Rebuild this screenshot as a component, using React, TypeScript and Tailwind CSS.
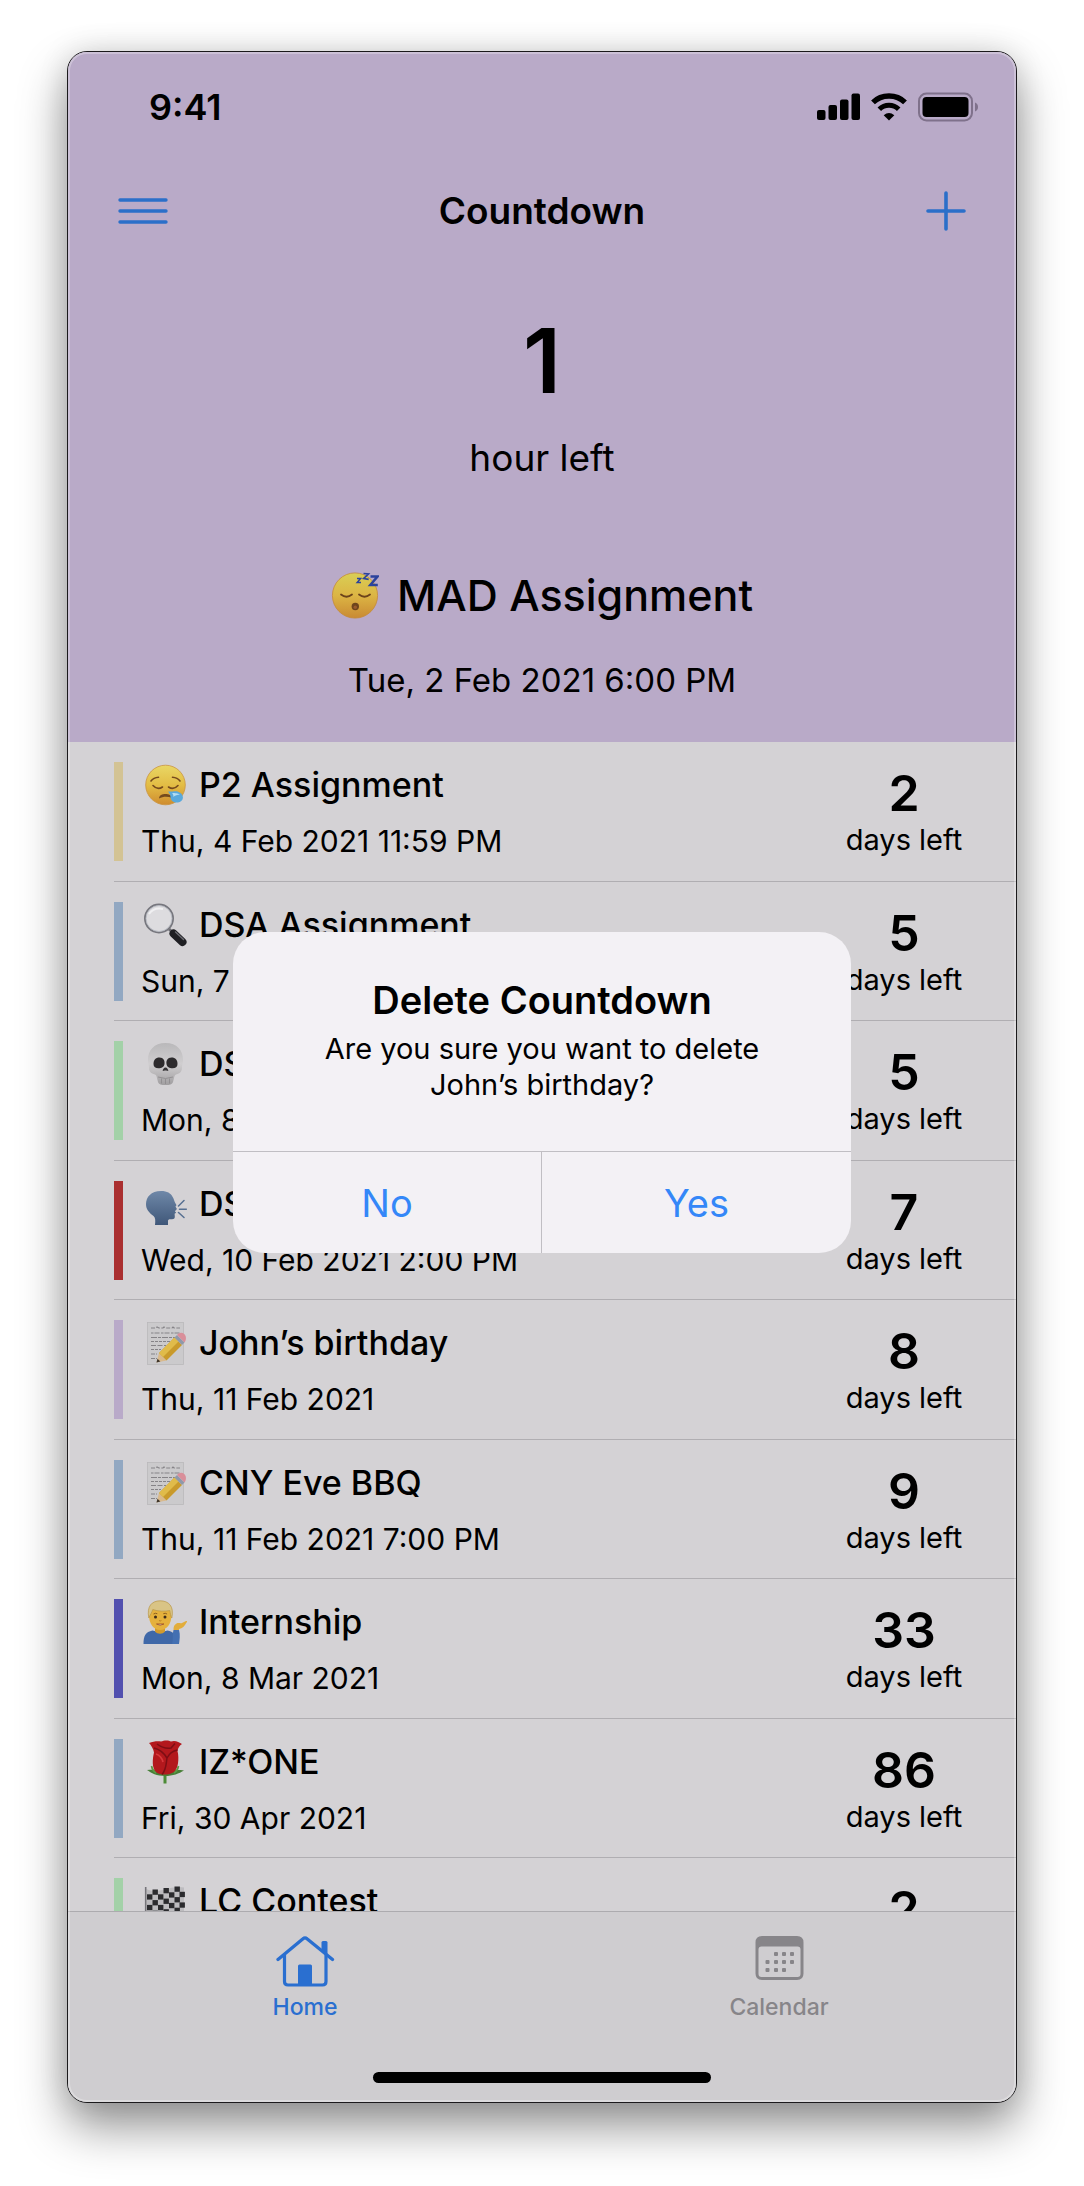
import type { ReactNode } from "react";

function SleepingFace() {
  return (
    <svg viewBox="0 0 48 48" className="size-12 shrink-0" aria-hidden="true">
      <defs>
        <linearGradient id="sleeping" x1="0" y1="0" x2="0" y2="1">
          <stop offset="0" stopColor="#d9cf55" />
          <stop offset="0.5" stopColor="#dcb544" />
          <stop offset="1" stopColor="#c98a33" />
        </linearGradient>
      </defs>
      <circle cx="24" cy="24.5" r="22.6" fill="url(#sleeping)" stroke="#c58a3a" strokeWidth="0.8" />
      <g fill="none" stroke="#6b431b" strokeWidth="1.8" strokeLinecap="round">
        <path d="M10 23.500q5.500 4.500 11 0" />
        <path d="M28 23.500q5.500 4.500 11 0" />
      </g>
      <circle cx="24.300" cy="35.500" r="3.700" fill="#6e441c" />
      <circle cx="24.300" cy="36.300" r="1.700" fill="#9a5a2c" />
      <g fill="none" stroke="#2c439c" strokeLinejoin="miter">
        <path d="M26 7.500h3.600l-3.400 4h3.800" strokeWidth="1.500" />
        <path d="M32.500 2.500l5 0.500l-4.800 4.500l5 0.800" strokeWidth="1.700" />
        <path d="M39.500 5.500h7l-7.200 8.500h7.500" strokeWidth="2.500" />
      </g>
    </svg>
  );
}

function Art({ children }: { children: ReactNode }) {
  return (
    <svg viewBox="0 0 44 44" className="size-11 shrink-0" aria-hidden="true">
      {children}
    </svg>
  );
}

function SleepyFace() {
  return (
    <Art>
      <defs>
        <linearGradient id="sleepy" x1="0" y1="0" x2="0" y2="1">
          <stop offset="0" stopColor="#e9d765" />
          <stop offset="0.500" stopColor="#e3bd45" />
          <stop offset="1" stopColor="#cf8c2f" />
        </linearGradient>
      </defs>
      <circle cx="22.500" cy="22" r="19.800" fill="url(#sleepy)" stroke="#cb9440" strokeWidth="0.800" />
      <g fill="none" stroke="#74491d" strokeWidth="1.600" strokeLinecap="round">
        <path d="M10 22.500q4.500 5 9.500 1.500" />
        <path d="M35 22.500q-4.500 5-9.500 1.500" />
        <path d="M8 18q2.500-3.500 7.500-3.800" />
        <path d="M37 18q-2.500-3.500-7.500-3.800" />
      </g>
      <path d="M16 35.500c0.500-3.500 3-4.500 6.500-4.500s6 1 6.500 4c-4-1.600-9-1.600-13 0.500z" fill="#74491d" />
      <path d="M25 28.500c5 0.300 8.500-1.500 12.500 1.500c4 3.200 3 8.500-2.500 9.500c-5 0.800-7.500-2.500-7.500-5.500c0-2.300-1-4-2.500-5.500z" fill="#59a9dc" />
      <path d="M29 30c3 0.300 6-0.300 8 2c-2.500-0.700-5 0.500-6.500 2c0-1.500-0.500-3-1.500-4z" fill="#b5def2" />
    </Art>
  );
}

function Magnifier() {
  return (
    <Art>
      <path d="M26 26l5 5" stroke="#6d6d74" strokeWidth="3" />
      <path d="M30.500 30.500L39.500 39" stroke="#1f1f23" strokeWidth="8" strokeLinecap="round" />
      <path d="M32.500 29l8 7.500" stroke="#6c6c73" strokeWidth="1.400" strokeLinecap="round" />
      <circle cx="16" cy="15.500" r="14" fill="#dddcdf" stroke="#77777e" strokeWidth="2" />
      <circle cx="16" cy="15.500" r="13" fill="none" stroke="#b9bcc4" strokeWidth="0.900" />
      <path d="M6 11q5-7 14-5" fill="none" stroke="#f0f0f2" strokeWidth="2" />
    </Art>
  );
}

function Skull() {
  return (
    <Art>
      <defs>
        <linearGradient id="skull" x1="0" y1="0" x2="0" y2="1">
          <stop offset="0" stopColor="#b9b8ba" />
          <stop offset="0.500" stopColor="#d0ced0" />
          <stop offset="1" stopColor="#a09ea0" />
        </linearGradient>
      </defs>
      <path d="M22.500 1C11 1 5 8.500 5 17.500c0 4 1 5 1 8s1 5.500 4.500 6.500c2.500 0.800 3 1.500 3.500 4l1 4c0.700 2.500 3.500 3 7.500 3s6.800-0.500 7.500-3l1-4c0.500-2.500 1-3.200 3.500-4c3.500-1 4.500-3.500 4.500-6.500s1-4 1-8C40 8.500 34 1 22.500 1z" fill="url(#skull)" />
      <path d="M10.500 22c0-4 2-6.500 6-6.500s5.500 3 5 6.500c-0.400 3-3 4.200-6 4.200s-5-1.200-5-4.200z" fill="#2d2b2d" />
      <path d="M34.500 22c0-4-2-6.500-6-6.500s-5.500 3-5 6.500c0.400 3 3 4.200 6 4.200s5-1.200 5-4.200z" fill="#2d2b2d" />
      <path d="M22.500 25.500c1.600 0 2.800 2 2.800 3.600l-2.300-0.500h-1l-2.300 0.500c0-1.600 1.200-3.600 2.800-3.600z" fill="#353335" />
      <path d="M15 35q7.500 3 15 0M18.500 36.500v5M22.500 37v5M26.500 36.500v5" fill="none" stroke="#8b898b" strokeWidth="0.800" />
    </Art>
  );
}

function SpeakingHead() {
  return (
    <Art>
      <defs>
        <linearGradient id="speaker" x1="0" y1="0" x2="0" y2="1">
          <stop offset="0" stopColor="#6f88a8" />
          <stop offset="1" stopColor="#3f5779" />
        </linearGradient>
      </defs>
      <path d="M18 9C8 9 3 15 3 22c0 5.500 3 8.500 7.500 12c2 1.700 2 4.500 1.500 9h13v-4c0-1.500 1-2 3-1.800c3 0.300 4-0.700 3.800-3l-0.200-2.500l1.600-1l-1.300-1.500l2-2.200l-1.500-2.500c1.200-0.700 1.200-1.500 0.500-2.500C30.500 19 31 9 18 9z" fill="url(#speaker)" />
      <path d="M35.500 24L41 18.500M36.500 27.200h6.800M35.500 30.500l5.500 5" stroke="#566f91" strokeWidth="1.500" strokeLinecap="round" />
    </Art>
  );
}

function Memo() {
  return (
    <Art>
      <rect x="4.500" y="1.500" width="36" height="42" fill="#cbcacc" stroke="#bab9bb" strokeWidth="0.800" />
      <g fill="none" stroke="#858387" strokeWidth="1.100">
        <path d="M8 7h5l1-1 2 1h4l1-1 2 1h6l1-1 1 1h6" strokeDasharray="4 1.500" />
        <path d="M8 12h30" strokeDasharray="2.500 1 5 1.500" />
        <path d="M8 16.500h26" strokeDasharray="6 1 3 1" />
        <path d="M8 20.500h20" strokeDasharray="3 1" />
        <path d="M8 24.500h15" strokeDasharray="5 1.500" />
        <path d="M8 28.500h10" strokeDasharray="3 1" />
        <path d="M8 33h6M8 37.500h6" strokeDasharray="4 1" />
      </g>
      <path d="M13.500 41.500l2.500-9.500l7.500 7.500z" fill="#d9b98c" />
      <path d="M13.500 41.500l1-3.800l2.800 2.900z" fill="#3b3328" />
      <path d="M16 32L31.500 16.500l7.500 7.500l-15.500 15.500z" fill="#c99a2b" />
      <path d="M16 32L31.500 16.500l4 4L20 36z" fill="#e0bb4a" />
      <path d="M31.500 16.500l2.500-2.500l7.500 7.500l-2.500 2.500z" fill="#8f99ab" />
      <path d="M34 14c2-2.500 5-3 7.200-1s2.300 5.800 0.300 8.500z" fill="#d98f9a" />
    </Art>
  );
}

function TippingHand() {
  return (
    <Art>
      <path d="M0.500 44c0-8 2-12 9-13.500l7.500 2l7.500-2c3 0.600 5 1.700 6 3v10.500z" fill="#3f68a8" />
      <path d="M29 44c1.500-5 0-9 1.500-14h5.500c1.500 5 0.500 10 0 14z" fill="#4470b2" />
      <path d="M12 26h10v5.500c-2.500 3-7.500 3-10 0z" fill="#d39b2d" />
      <path d="M6 15C6 6 10 3 17.200 3s11.300 3 11.300 12c0 8.500-4.500 15-11.300 15S6 23.500 6 15z" fill="#e5b13c" />
      <path d="M5.800 18C3.500 6 9 0.800 17.200 0.800S31.500 6 28.800 18c-1-1.500-1.500-4.500-2-7.500c-4.500 1-12 1-17-1c-1 3-2.500 5-4 8.500z" fill="#d9c485" stroke="#b99649" strokeWidth="0.700" />
      <circle cx="12.500" cy="17" r="1.500" fill="#3c2a18" />
      <circle cx="22" cy="17" r="1.500" fill="#3c2a18" />
      <path d="M10.500 14q2-1.300 3.800-0.300M20.300 13.700q2-1 3.800 0.300" fill="none" stroke="#8c5f20" strokeWidth="1" />
      <path d="M13.500 24q3.700 2.500 7.400 0z" fill="#f1e3d2" stroke="#99491f" strokeWidth="0.800" />
      <path d="M16 20.500q1.200 1 2.400 0" fill="none" stroke="#b47a24" strokeWidth="0.900" />
      <path d="M30.500 30c0-3.500 0.500-5 3-6.500c2-1 4 0.200 5.500-0.500l4-2c1.200-0.300 1.300 0.800 0.500 1.500c-2 3.500-4 6-7.500 6.500v1z" fill="#e2ad3b" />
    </Art>
  );
}

function Rose() {
  return (
    <Art>
      <path d="M22 32v11.500" stroke="#4c8b36" strokeWidth="3" />
      <path d="M22 36C14 36 8 33 4 30c5-0.500 9-0.500 12 1l6 2l7-2c3-1.200 7-1 12-0.500c-5 3-11 5.500-19 5.500z" fill="#477f37" />
      <path d="M13 33c-3-2-4-4-4.500-7M31 33c3-2 4-4 4.500-7" fill="none" stroke="#5d9a45" strokeWidth="1.600" />
      <path d="M6 3c4-1.500 8-2 12-1.500C21 0 26 0 28 1.500C32 0 36 2 39 4c-2.500 1.500-4 4-4.500 7c2 8 0.500 18-3.500 21c-4.500 3.200-13 3.500-17.500 0.500c-5-4-4-14-2.500-20C10.500 9 8 5 6 3z" fill="#b3181d" />
      <path d="M11 8c6 1.500 10 5 13 10c2-4 5-7 10.500-8M24 18c-1 6-0.500 11-5 16.500M14 4c4 3 9 5 14 4l4-4.500" fill="none" stroke="#7d0e14" strokeWidth="1.500" />
      <path d="M13 14c3 1 6 4 7 8" fill="none" stroke="#d7383b" strokeWidth="1.800" />
    </Art>
  );
}

function ChequeredFlag() {
  const xs = [4, 9.5, 15, 20.5, 26, 31.5, 36.5];
  const lift = [2, 2.5, 2, 1, 0, -0.5, -0.5];
  return (
    <Art>
      <path d="M3.500 10c6 3 12 2 18 0.500s13-3.500 19.500-2v26c-7-1.500-13 0.500-19 2s-12 2-18.500-1z" fill="#bdbcbf" />
      {xs.flatMap((x, column) =>
        [0, 1, 2, 3, 4].map((row) =>
          (row + column) % 2 === 1 ? (
            <rect key={x + "-" + row} x={x} y={8 + lift[column] + row * 5.3} width="5.400" height="5.300" fill="#2b2b2e" />
          ) : null,
        ),
      )}
      <path d="M2.700 8v36" stroke="#76757a" strokeWidth="1.600" />
    </Art>
  );
}

function StatusIcons() {
  return (
    <div className="flex items-center gap-[11px]">
      <svg viewBox="0 0 43 28" className="h-7 w-[43px]" aria-label="Signal strength">
        <rect x="0" y="17" width="8.500" height="10" rx="2" />
        <rect x="11.500" y="12" width="8.500" height="15" rx="2" />
        <rect x="23" y="6.500" width="8.500" height="20.500" rx="2" />
        <rect x="34.500" y="0.500" width="8.500" height="26.500" rx="2" />
      </svg>
      <svg viewBox="0 0 36 28" className="h-7 w-9" aria-label="Wi-Fi">
        <path d="M2 9.300C10.500 0.800 25.500 0.800 34 9.300" fill="none" stroke="#000" strokeWidth="5.400" />
        <path d="M8.300 16.200C13.700 10.800 22.300 10.800 27.700 16.200" fill="none" stroke="#000" strokeWidth="5" />
        <path d="M12.700 22.200q5.300-4.600 10.600 0L18 27.400z" />
      </svg>
      <svg viewBox="0 0 61 30" className="h-[30px] w-[61px]" aria-label="Battery full">
        <rect x="1" y="1.500" width="53" height="27" rx="7.500" fill="none" stroke="#7f718b" strokeWidth="2" />
        <rect x="4.500" y="5" width="46" height="20" rx="4" />
        <path d="M57 10.500c4 1.500 4 7.500 0 9z" fill="#7f718b" />
      </svg>
    </div>
  );
}

function HomeIcon() {
  return (
    <svg viewBox="0 0 60 52" className="h-[52px] w-[60px]" fill="none" stroke="currentColor" aria-hidden="true">
      <path d="M3 24.500L28 3.800q2-1.800 4 0L57.500 24.500" strokeWidth="3.300" strokeLinecap="round" />
      <path d="M9.500 19.500V46.500q0 3.500 3.500 3.500H47.500q3.500 0 3.500-3.500V19.500" strokeWidth="3.200" />
      <path d="M46.500 7.500q0-1.500 1.500-1.500h3q1.500 0 1.500 1.500V20l-6-4.500z" fill="currentColor" stroke="none" />
      <path d="M23 50V31q0-1.500 1.500-1.500h11q1.500 0 1.500 1.500v19z" fill="currentColor" stroke="none" />
    </svg>
  );
}

function CalendarIcon() {
  const dots = [
    [27, 19], [35, 19], [43, 19],
    [18.5, 27], [27, 27], [35, 27], [43, 27],
    [18.5, 35], [27, 35], [35, 35],
  ];
  return (
    <svg viewBox="0 0 60 52" className="h-[52px] w-[60px]" fill="currentColor" aria-hidden="true">
      <path fillRule="evenodd" d="M13 1H48q6.500 0 6.500 6.500V38.500q0 6.500-6.500 6.500H13q-6.500 0-6.500-6.500V7.500Q6.500 1 13 1zM12.500 11.500q-3 0-3 3V39q0 3 3 3H48.500q3 0 3-3V14.500q0-3-3-3z" />
      {dots.map(([x, y]) => (
        <rect key={x + "-" + y} x={x - 2} y={y - 2} width="4" height="4" rx="1" />
      ))}
    </svg>
  );
}

type Countdown = {
  icon: ReactNode;
  title: string;
  date: string;
  days: number;
  bar: string;
};

const countdowns: Countdown[] = [
  { icon: <SleepyFace />, title: "P2 Assignment", date: "Thu, 4 Feb 2021 11:59 PM", days: 2, bar: "bg-[#d3c394]" },
  { icon: <Magnifier />, title: "DSA Assignment", date: "Sun, 7 Feb 2021", days: 5, bar: "bg-[#92a8c2]" },
  { icon: <Skull />, title: "DSA Exam", date: "Mon, 8 Feb 2021", days: 5, bar: "bg-[#a3d1a8]" },
  { icon: <SpeakingHead />, title: "DSA Talk", date: "Wed, 10 Feb 2021 2:00 PM", days: 7, bar: "bg-[#aa2f30]" },
  { icon: <Memo />, title: "John’s birthday", date: "Thu, 11 Feb 2021", days: 8, bar: "bg-[#b9aac9]" },
  { icon: <Memo />, title: "CNY Eve BBQ", date: "Thu, 11 Feb 2021 7:00 PM", days: 9, bar: "bg-[#92a8c2]" },
  { icon: <TippingHand />, title: "Internship", date: "Mon, 8 Mar 2021", days: 33, bar: "bg-[#5250af]" },
  { icon: <Rose />, title: "IZ*ONE", date: "Fri, 30 Apr 2021", days: 86, bar: "bg-[#92a8c2]" },
  { icon: <ChequeredFlag />, title: "LC Contest", date: "Sat, 1 May 2021", days: 2, bar: "bg-[#a3d1a8]" },
];

function CountdownRow({ icon, title, date, days, bar }: Countdown) {
  return (
    <li className="ml-[46px] flex items-start border-b border-[#b0aeb2] pt-5">
      <span className={"mr-[18px] h-[99px] w-[9px] shrink-0 " + bar} />
      <div className="min-w-0 flex-1">
        <h3 className="flex items-center gap-3 pl-0.5 text-[34px] leading-[46px] font-medium">
          {icon}
          <span className="whitespace-nowrap">{title}</span>
        </h3>
        <p className="mt-[13px] text-[30px] leading-10 whitespace-nowrap">{date}</p>
      </div>
      <div className="mr-[47px] w-[130px] shrink-0 pt-1.5 text-center">
        <p className="text-[50px] leading-[50px] font-semibold">{days}</p>
        <p className="mt-0.5 text-[29px] leading-10 whitespace-nowrap">days left</p>
      </div>
    </li>
  );
}

function DeleteDialog() {
  return (
    <div className="absolute inset-0 flex items-center justify-center pt-[31px]">
      <div
        role="alertdialog"
        aria-labelledby="delete-title"
        aria-describedby="delete-message"
        className="w-[618px] max-w-full overflow-hidden rounded-[32px] bg-[#f3f1f5] text-center"
      >
        <div className="px-16 pt-11 pb-12">
          <h2 id="delete-title" className="text-[38px] leading-[48px] font-semibold">Delete Countdown</h2>
          <p id="delete-message" className="mt-[7px] text-[29px] leading-9">
            Are you sure you want to delete
            <br />
            John’s birthday?
          </p>
        </div>
        <div className="grid grid-cols-2 border-t border-[#c0bec3] text-[38px] text-[#3487f8]">
          <button type="button" className="h-[101px] border-r border-[#c0bec3] pt-0.5">No</button>
          <button type="button" className="h-[101px] pt-0.5">Yes</button>
        </div>
      </div>
    </div>
  );
}

export default function App() {
  return (
    <main className="flex h-screen flex-col bg-white px-[67px] pt-[51px] pb-[83px] font-['Inter',sans-serif] text-black">
      <div className="relative flex min-h-0 flex-1 flex-col overflow-hidden rounded-[20px] border border-[#1b1a1c] bg-[#d4d2d5] shadow-[0_24px_48px_rgba(0,0,0,0.42),0_0_30px_rgba(0,0,0,0.12)]">
        <header className="shrink-0 bg-[#b9aac8]">
          <div className="flex h-[110px] items-center justify-between pr-[37px] pl-[81px]">
            <span className="text-[36px] leading-[44px] font-semibold">9:41</span>
            <StatusIcons />
          </div>
          <nav className="flex h-[98px] items-center justify-between px-[50px] text-[#2b6fc9]">
            <button type="button" aria-label="Menu" className="w-[50px]">
              <svg viewBox="0 0 50 30" className="h-[30px] w-[50px]" stroke="currentColor" strokeWidth="3.400" strokeLinecap="round">
                <path d="M2 4h46M2 15h46M2 26h46" />
              </svg>
            </button>
            <h1 className="text-[37px] leading-[48px] font-semibold text-black">Countdown</h1>
            <button type="button" aria-label="Add countdown" className="flex w-[50px] justify-end">
              <svg viewBox="0 0 40 40" className="size-10" stroke="currentColor" strokeWidth="3.600" strokeLinecap="round">
                <path d="M20 2v36M2 20h36" />
              </svg>
            </button>
          </nav>
          <section className="flex flex-col items-center pt-14 pb-10">
            <p className="text-[90px] leading-[90px] font-semibold">1</p>
            <p className="mt-7 text-[37px] leading-[48px]">hour left</p>
            <h2 className="mt-[85px] flex items-center gap-[18px] text-[43px] leading-[56px] font-medium">
              <SleepingFace />
              MAD Assignment
            </h2>
            <p className="mt-[35px] text-[33px] leading-[44px]">Tue, 2 Feb 2021 6:00 PM</p>
          </section>
        </header>

        <div className="min-h-0 flex-1 overflow-hidden">
          <ul className="grid min-h-[1256px] auto-rows-fr">
            {countdowns.map((item) => (
              <CountdownRow key={item.title} {...item} />
            ))}
          </ul>
        </div>

        <footer className="shrink-0 border-t border-[#adabaf] bg-[#cfcdd0] pt-[23px] pb-[19px]">
          <nav className="grid grid-cols-2 text-[23px] leading-7 font-medium">
            <a href="#home" aria-current="page" className="flex flex-col items-center gap-1.5 text-[#2a6fd0]">
              <HomeIcon />
              Home
            </a>
            <a href="#calendar" className="flex flex-col items-center gap-1.5 text-[#878589]">
              <CalendarIcon />
              Calendar
            </a>
          </nav>
          <div className="mx-auto mt-[51px] h-[11px] w-[338px] max-w-full rounded-full bg-black" />
        </footer>

        <DeleteDialog />
        <div className="pointer-events-none absolute inset-0 rounded-[19px] shadow-[inset_0_0_0_2px_rgba(255,255,255,0.28)]" />
      </div>
    </main>
  );
}
